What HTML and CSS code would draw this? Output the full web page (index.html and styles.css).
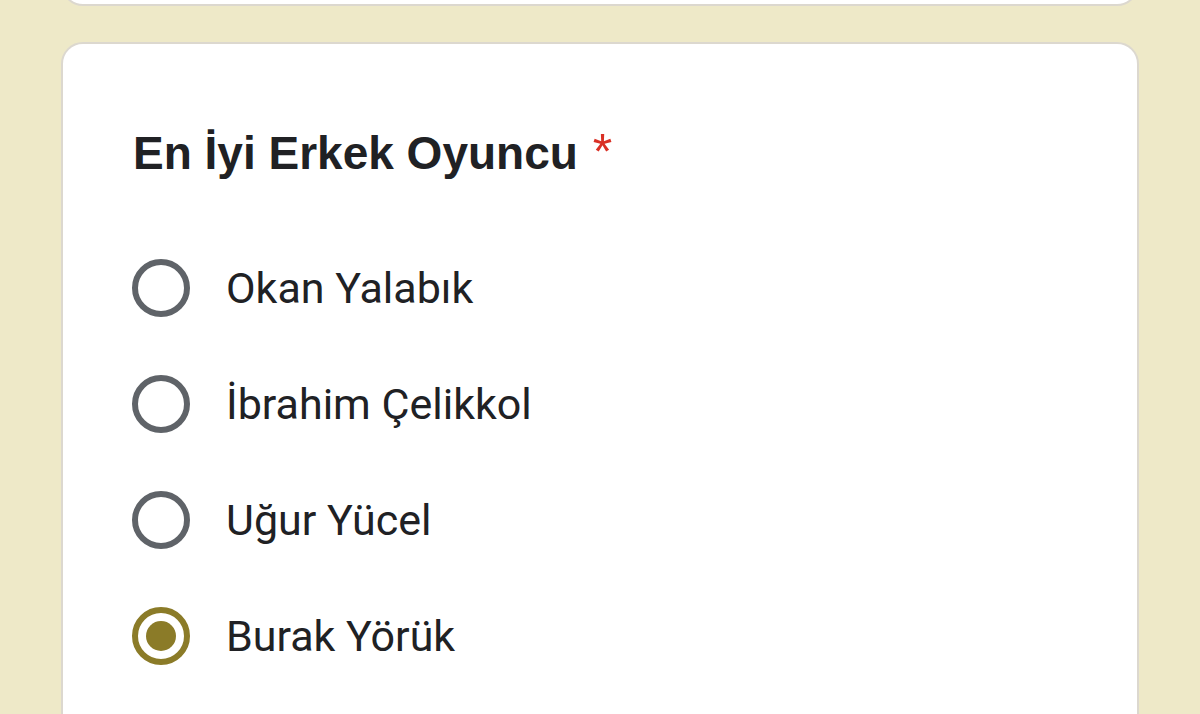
FILE: index.html
```html
<!DOCTYPE html>
<html lang="tr">
<head>
<meta charset="utf-8">
<title>En İyi Erkek Oyuncu</title>
<link rel="stylesheet" href="styles.css">
</head>
<body>
<div class="page">
  <div class="card card-prev"></div>
  <div class="card question">
    <div class="title">En İyi Erkek Oyuncu <span class="req">*</span></div>
    <div class="options">
      <label class="option"><span class="radio"></span><span class="label">Okan Yalabık</span></label>
      <label class="option"><span class="radio"></span><span class="label">İbrahim Çelikkol</span></label>
      <label class="option"><span class="radio"></span><span class="label">Uğur Yücel</span></label>
      <label class="option"><span class="radio checked"></span><span class="label">Burak Yörük</span></label>
    </div>
  </div>
</div>
</body>
</html>
```
FILE: styles.css
```css
html, body {
  margin: 0;
  padding: 0;
  background: #eee9c8;
  height: 100%;
  overflow: hidden;
}
.page {
  padding: 0 61px;
}
.card {
  background: #fff;
  border: 2px solid #dcd8cf;
  border-radius: 22px;
}
.card-prev {
  height: 40px;
  margin-top: -38px;
}
.question {
  margin-top: 36px;
  padding: 86px 68px 0;
  height: 640px;
}
.title {
  margin-left: 2px;
  font-family: "Liberation Sans", Arial, sans-serif;
  font-weight: bold;
  font-size: 46px;
  line-height: 46px;
  height: 46px;
  color: #202124;
}
.req {
  margin-left: 2px;
  color: #d93025;
  font-weight: normal;
  font-size: 50px;
  line-height: 0;
  font-family: "Liberation Sans", Arial, sans-serif;
}
.options {
  margin-top: 54px;
  display: flex;
  flex-direction: column;
}
.option {
  display: flex;
  align-items: center;
  height: 116px;
  gap: 36px;
}
.radio {
  box-sizing: border-box;
  width: 58px;
  height: 58px;
  margin-left: 1px;
  border: 6px solid #5f6368;
  border-radius: 50%;
  display: flex;
  align-items: center;
  justify-content: center;
  flex: none;
}
.radio.checked {
  border-color: #8b7b28;
}
.radio.checked::after {
  content: "";
  width: 30px;
  height: 30px;
  border-radius: 50%;
  background: #8b7b28;
}
.label {
  font-family: Roboto, "Noto Sans", sans-serif;
  font-size: 43px;
  color: #202124;
}
```
